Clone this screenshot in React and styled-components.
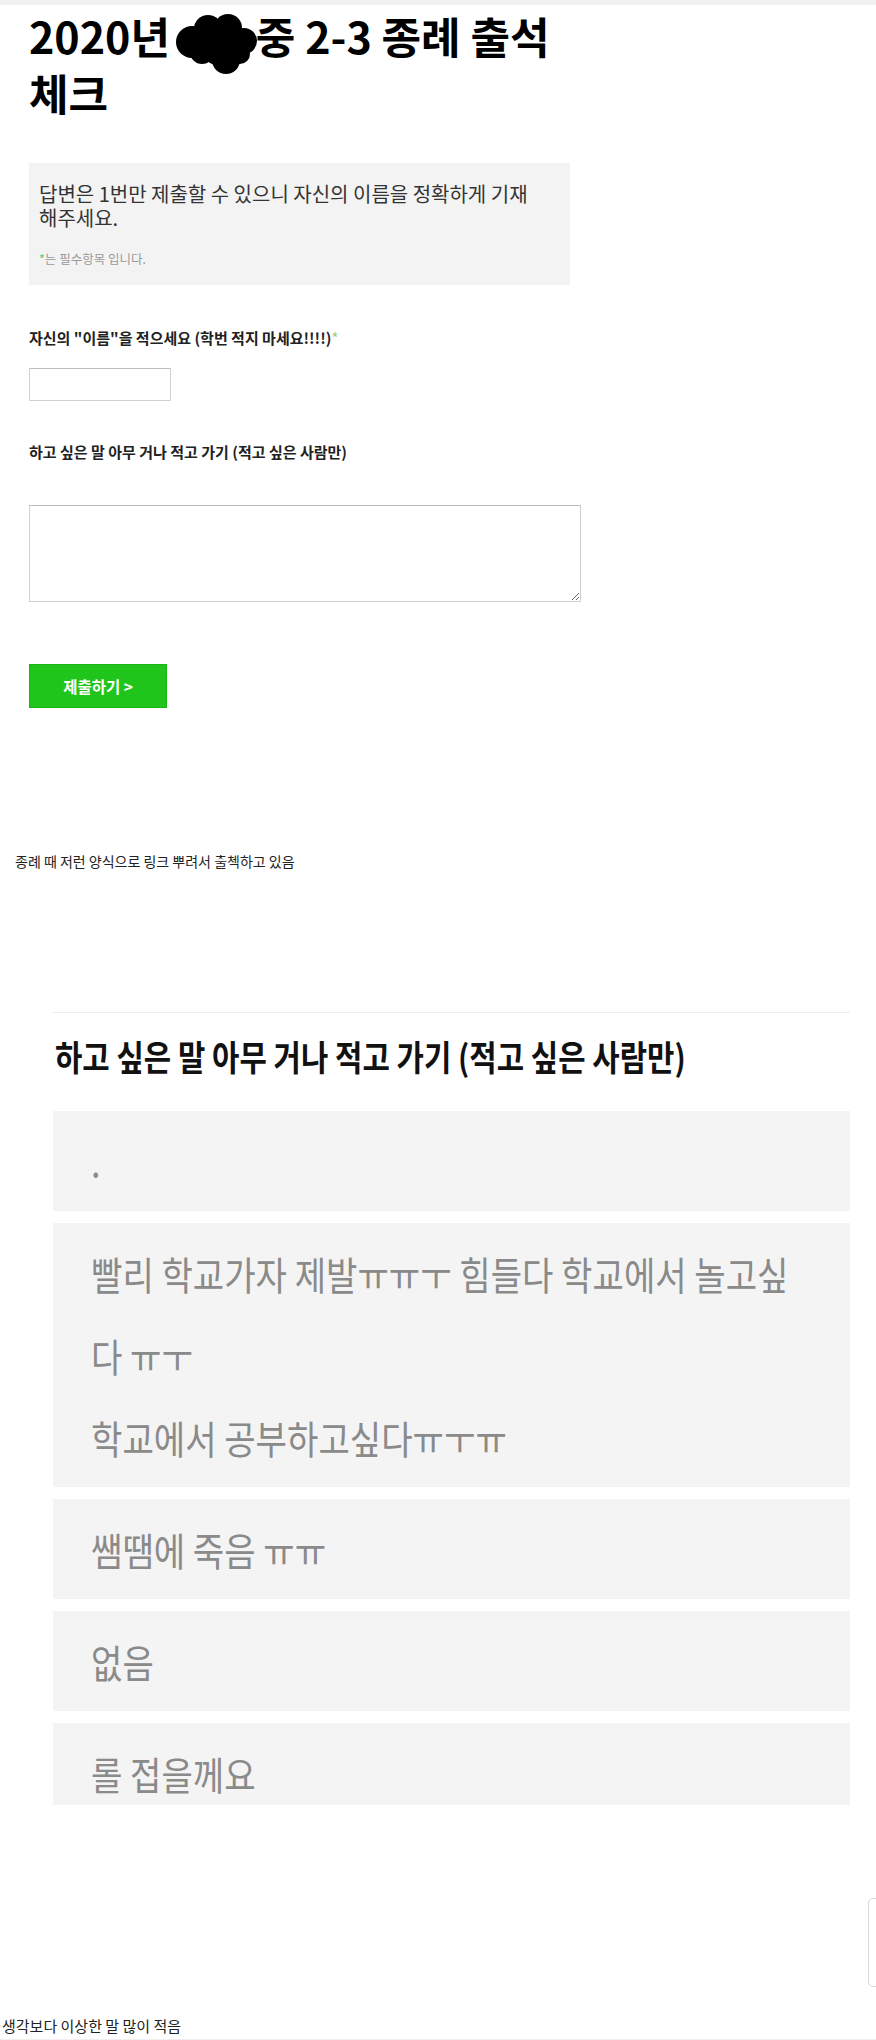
import React from "react"
import styled, { createGlobalStyle } from "styled-components"

const GlobalStyle = createGlobalStyle`
  body {
    margin: 0;
    background: #fff;
    font-family: "Noto Sans CJK KR", "Noto Sans", sans-serif;
    color: #222;
  }
`

const answers = [
  { lines: ["."] },
  {
    lines: [
      "빨리 학교가자 제발ㅠㅠㅜ 힘들다 학교에서 놀고싶",
      "다 ㅠㅜ",
      "학교에서 공부하고싶다ㅠㅜㅠ",
    ],
  },
  { lines: ["쌤땜에 죽음 ㅠㅠ"] },
  { lines: ["없음"] },
  { lines: ["롤 접을께요"], cut: true },
]

// redaction scribble over the school name
const Blob = () => (
  <BlobSvg viewBox="0 0 84 60" width="84" height="60">
    <circle cx="18" cy="28" r="16" />
    <circle cx="34" cy="15" r="14" />
    <circle cx="54" cy="14" r="14" />
    <circle cx="70" cy="27" r="13" />
    <circle cx="44" cy="34" r="17" />
    <circle cx="28" cy="38" r="12" />
    <circle cx="52" cy="46" r="14" />
    <circle cx="66" cy="40" r="10" />
  </BlobSvg>
)

const App = () => {
  return (
    <Page>
      <GlobalStyle />
      <TopStrip />

      <Form>
        <Title>
          2020년 <Blob />중 2-3 종례 출석 체크
        </Title>

        <InfoBox>
          <Notice>
            답변은 1번만 제출할 수 있으니 자신의 이름을 정확하게 기재
            해주세요.
          </Notice>
          <Required>
            <Star>*</Star>는 필수항목 입니다.
          </Required>
        </InfoBox>

        <Label $gap={44}>
          자신의 "이름"을 적으세요 (학번 적지 마세요!!!!)<LabelStar>*</LabelStar>
        </Label>
        <NameInput type="text" />

        <Label $gap={42}>하고 싶은 말 아무 거나 적고 가기 (적고 싶은 사람만)</Label>
        <Memo />

        <SubmitButton type="button">제출하기 &gt;</SubmitButton>
      </Form>

      <Caption>종례 때 저런 양식으로 링크 뿌려서 출첵하고 있음</Caption>

      <Results>
        <Divider />
        <ResultTitle>
          <Condensed $scale={0.85}>
            하고 싶은 말 아무 거나 적고 가기 (적고 싶은 사람만)
          </Condensed>
        </ResultTitle>
        <AnswerList>
          {answers.map((a, i) => (
            <Answer key={i} $cut={a.cut}>
              {a.lines.map((line, j) => (
                <AnswerLine key={j}>
                  <Condensed $scale={0.875}>{line}</Condensed>
                </AnswerLine>
              ))}
            </Answer>
          ))}
        </AnswerList>
      </Results>

      <BottomCaption>생각보다 이상한 말 많이 적음</BottomCaption>
      <BottomStrip />

      <SideTab />
    </Page>
  )
}

const Page = styled.div`
  position: relative;
  min-height: 2040px;
  overflow: hidden;
`

const TopStrip = styled.div`
  height: 5px;
  background: #f1f1f1;
`

const Form = styled.div`
  padding-left: 29px;
  width: 552px;
  display: flex;
  flex-direction: column;
  align-items: flex-start;
`

const Title = styled.h1`
  margin: 2px 0 0;
  width: 560px;
  font-size: 43px;
  line-height: 57px;
  font-weight: 700;
  color: #000;
  word-break: keep-all;
`

const BlobSvg = styled.svg`
  display: inline-block;
  vertical-align: -8px;
  margin: 0 -2px -12px -6px;
  fill: #000;
`

const InfoBox = styled.div`
  margin-top: 42px;
  width: 541px;
  box-sizing: border-box;
  background: #f3f3f3;
  padding: 19px 10px 18px;
`

const Notice = styled.p`
  margin: 0;
  font-size: 20px;
  line-height: 24px;
  color: #333;
  word-break: keep-all;
`

const Required = styled.p`
  margin: 21px 0 0;
  font-size: 12.5px;
  line-height: 16px;
  color: #999;
`

const Star = styled.span`
  color: #6cbf5a;
`

const Label = styled.label`
  margin-top: ${({ $gap }) => $gap}px;
  font-size: 15px;
  line-height: 18px;
  font-weight: 700;
  color: #222;
`

const LabelStar = styled.span`
  color: #9ccc7c;
  font-weight: 400;
`

const NameInput = styled.input`
  margin-top: 21px;
  width: 142px;
  height: 33px;
  box-sizing: border-box;
  border: 1px solid #d0d0d0;
  border-top-color: #bdbdbd;
  background: #fff;
  outline: none;
`

const Memo = styled.textarea`
  margin-top: 44px;
  width: 552px;
  height: 97px;
  box-sizing: border-box;
  border: 1px solid #d0d0d0;
  border-top-color: #bdbdbd;
  background: #fff;
  outline: none;
`

const SubmitButton = styled.button`
  margin-top: 62px;
  width: 138px;
  height: 44px;
  border: 1px solid #1cb318;
  background: #20c51c;
  color: #fff;
  font-family: inherit;
  font-size: 15.5px;
  font-weight: 700;
  cursor: pointer;
`

const Caption = styled.p`
  margin: 144px 0 0;
  padding-left: 15px;
  font-size: 14px;
  line-height: 18px;
  color: #222;
`

const Results = styled.section`
  margin: 142px 0 0 53px;
  width: 797px;
`

const Divider = styled.div`
  height: 1px;
  background: #ececec;
`

const ResultTitle = styled.h2`
  margin: 21px 0 0 2px;
  font-size: 35px;
  line-height: 44px;
  font-weight: 700;
  color: #111;
  white-space: nowrap;
`

const Condensed = styled.span`
  display: inline-block;
  transform: scaleX(${({ $scale }) => $scale});
  transform-origin: left center;
  white-space: nowrap;
`

const AnswerList = styled.div`
  margin-top: 33px;
  display: flex;
  flex-direction: column;
  gap: 12px;
`

const Answer = styled.div`
  background: #f4f4f4;
  padding: 9px 38px ${({ $cut }) => ($cut ? 0 : 9)}px;
  height: ${({ $cut }) => ($cut ? "82px" : "auto")};
  box-sizing: border-box;
  overflow: hidden;
`

const AnswerLine = styled.div`
  font-size: 39px;
  line-height: 82px;
  color: #8a8a8a;
  white-space: nowrap;
`

const BottomCaption = styled.p`
  margin: 211px 0 0;
  padding-left: 2px;
  font-size: 15px;
  line-height: 20px;
  color: #222;
`

const BottomStrip = styled.div`
  margin-top: 3px;
  height: 6px;
  background: #efefef;
`

const SideTab = styled.div`
  position: absolute;
  top: 1898px;
  right: -12px;
  width: 18px;
  height: 87px;
  border: 1px solid #d8d8d8;
  border-radius: 5px;
  background: #fff;
`

export default App
